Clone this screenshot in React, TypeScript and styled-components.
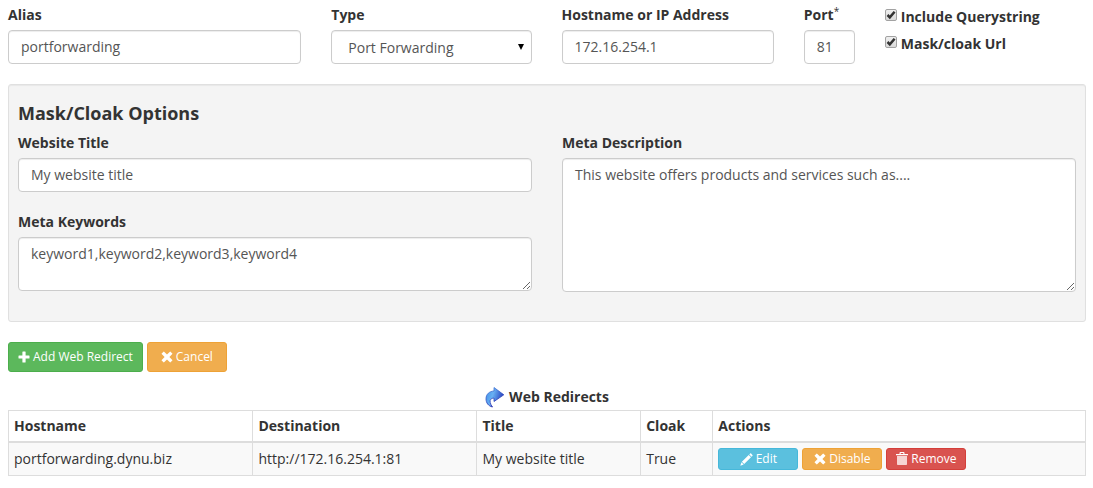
import React, { useState } from "react";
import styled, { createGlobalStyle, css } from "styled-components";

const GlobalStyle = createGlobalStyle`
  *, *::before, *::after { box-sizing: border-box; }
  body {
    margin: 0;
    background: #fff;
    color: #333;
    font-family: "Open Sans", "Helvetica Neue", Helvetica, Arial, sans-serif;
    font-size: 14px;
    line-height: 20px;
  }
`;

const Page = styled.main`
  padding: 5px 7px 12px 8px;
`;

const TopRow = styled.div`
  display: grid;
  grid-template-columns: 293fr 200fr 212fr 51fr 201fr;
  column-gap: 30px;
  margin-bottom: 20px;
`;

const Field = styled.div`
  display: flex;
  flex-direction: column;
  gap: 5px;
  min-width: 0;
`;

const Label = styled.label`
  font-weight: 700;
  white-space: nowrap;
`;

const Required = styled.span`
  font-size: 10px;
  font-weight: 400;
  line-height: 1;
  vertical-align: 5px;
`;

const control = css`
  display: block;
  width: 100%;
  margin: 0;
  padding: 6px 12px;
  border: 1px solid #ccc;
  border-radius: 4px;
  background: #fff;
  box-shadow: inset 0 1px 1px rgba(0, 0, 0, 0.075);
  color: #555;
  font-family: inherit;
  font-size: 14px;
  line-height: 20px;
`;

const TextInput = styled.input`
  ${control}
  height: 34px;
  padding: 5px 12px 7px;
`;

const TextArea = styled.textarea<{ $height: number }>`
  ${control}
  height: ${(p) => p.$height}px;
  resize: both;
`;

const SelectWrap = styled.div`
  position: relative;
`;

const Select = styled.select`
  ${control}
  height: 34px;
  padding: 7px 24px 5px 16px;
  appearance: none;
`;

const SelectArrow = styled.svg`
  position: absolute;
  top: 14px;
  right: 7px;
  pointer-events: none;
`;

const CheckList = styled.div`
  display: flex;
  flex-direction: column;
  gap: 7px;
  padding-top: 2px;
`;

const CheckRow = styled.label`
  display: flex;
  gap: 4px;
  font-weight: 700;
  white-space: nowrap;
`;

const CheckBoxWrap = styled.span`
  position: relative;
  width: 12px;
  height: 12px;
  margin-top: 2px;
`;

const CheckBox = styled.input`
  display: block;
  width: 12px;
  height: 12px;
  margin: 0;
  appearance: none;
  border: 1px solid #a2a2a2;
  border-radius: 2px;
  background: linear-gradient(#efefef, #dadada);
`;

const CheckMark = styled.svg`
  position: absolute;
  top: 0;
  left: 0;
  pointer-events: none;
`;

const Well = styled.section`
  margin-bottom: 20px;
  padding: 18px 9px 29px;
  border: 1px solid #e0e0e0;
  border-radius: 3px;
  background: #f4f4f4;
  box-shadow: inset 0 1px 1px rgba(0, 0, 0, 0.05);
`;

const WellTitle = styled.h4`
  margin: 0 0 10px;
  font-size: 18px;
  font-weight: 700;
  line-height: 20px;
`;

const Columns = styled.div`
  display: grid;
  grid-template-columns: 1fr 1fr;
  column-gap: 30px;
`;

const Stack = styled.div`
  display: flex;
  flex-direction: column;
  gap: 20px;
`;

type Tone = "success" | "warning" | "info" | "danger";

const tones: Record<Tone, { fill: string; edge: string }> = {
  success: { fill: "#5cb85c", edge: "#4cae4c" },
  warning: { fill: "#f0ad4e", edge: "#eea236" },
  info: { fill: "#5bc0de", edge: "#46b8da" },
  danger: { fill: "#d9534f", edge: "#d43f3a" },
};

const Button = styled.button<{ $tone: Tone; $small?: boolean }>`
  display: inline-flex;
  align-items: center;
  justify-content: center;
  gap: 3px;
  min-width: 80px;
  height: ${(p) => (p.$small ? 22 : 30)}px;
  padding: 0 ${(p) => (p.$small ? 5 : 9)}px;
  border: 1px solid ${(p) => tones[p.$tone].edge};
  border-radius: 3px;
  background: ${(p) => tones[p.$tone].fill};
  color: #fff;
  font-family: inherit;
  font-size: 12px;
  line-height: 18px;
  white-space: nowrap;
  cursor: pointer;
`;

const ButtonRow = styled.div`
  display: flex;
  gap: 4px;
`;

const Actions = styled.div`
  display: flex;
  gap: 4px;
`;

const TableTitle = styled.caption`
  padding-bottom: 2px;
  font-weight: 700;
`;

const TitleContent = styled.span`
  display: flex;
  align-items: center;
  justify-content: center;
  gap: 4px;
`;

const Table = styled.table`
  width: 100%;
  margin-top: 14px;
  border-collapse: collapse;
  table-layout: fixed;
`;

const Col = styled.col<{ $share: number }>`
  width: ${(p) => p.$share}%;
`;

const HeadCell = styled.th`
  padding: 5px;
  border: 1px solid #ddd;
  border-bottom-width: 2px;
  font-weight: 700;
  text-align: left;
`;

const Cell = styled.td`
  padding: 5px;
  border: 1px solid #ddd;
  background: #f9f9f9;
`;

const PlusIcon = () => (
  <svg width="12" height="12" viewBox="0 0 12 12" fill="#fff" aria-hidden="true">
    <path d="M4.900.5h2.200q.5 0 .5.5v3.400H11q.5 0 .5.5v2.200q0 .5-.5.5H7.600V11q0 .5-.5.5H4.900q-.5 0-.5-.5V7.600H1q-.5 0-.5-.5V4.900q0-.5.5-.5h3.400V1q0-.5.5-.5z" />
  </svg>
);

const CrossIcon = () => (
  <svg width="12" height="12" viewBox="0 0 12 12" fill="#fff" aria-hidden="true">
    <path d="M3.100.7 6 3.600 8.900.7q.3-.3.600 0l1.800 1.800q.3.3 0 .600L8.400 6l2.900 2.900q.3.3 0 .600l-1.800 1.800q-.3.3-.600 0L6 8.400l-2.900 2.900q-.3.3-.600 0L.7 9.500q-.3-.3 0-.600L3.600 6 .7 3.100q-.3-.3 0-.600L2.500.7q.3-.3.600 0z" />
  </svg>
);

const PencilIcon = () => (
  <svg width="13" height="13" viewBox="0 0 13 13" fill="#fff" aria-hidden="true">
    <path d="M10.100.6q.5-.5 1 0l1.300 1.300q.5.500 0 1l-.800.800-2.300-2.300zM8.700 2l2.300 2.300-6.800 6.800-2.300-2.300zM1.500 9.300l2.200 2.200L.3 12.700z" />
  </svg>
);

const TrashIcon = () => (
  <svg width="12" height="14" viewBox="0 0 12 14" fill="#fff" aria-hidden="true">
    <path d="M3.500 2V1q0-1 1-1h3q1 0 1 1v1H12v1.200H0V2zM4.700 2h2.600v-.900H4.700z" fillRule="evenodd" />
    <path d="M1 4h10v8.200q0 .8-.8.800H1.800Q1 13 1 12.200z" opacity=".75" />
  </svg>
);

const RedirectIcon = () => (
  <svg width="20" height="22" viewBox="0 0 20 22" aria-hidden="true">
    <defs>
      <linearGradient id="arrowFill" x1="0" y1="0" x2="1" y2="0.3">
        <stop offset="0" stopColor="#3f8fe6" />
        <stop offset="0.45" stopColor="#69b0f3" />
        <stop offset="1" stopColor="#2a44c0" />
      </linearGradient>
      <linearGradient id="arrowEdge" x1="0" y1="0" x2="0.4" y2="1">
        <stop offset="0" stopColor="#4a8ae0" />
        <stop offset="1" stopColor="#1c1fa8" />
      </linearGradient>
    </defs>
    <path
      d="M9 1.500 18.800 8.800 9 15.500V12.100C6 12 4.600 13.800 5.200 16.400 5.600 18.200 6.300 19.600 7.500 21 3.300 20 1 16.900 1 12.800 1 8 4.600 5.200 9 5z"
      fill="url(#arrowFill)"
      stroke="url(#arrowEdge)"
      strokeWidth="0.8"
      strokeLinejoin="round"
    />
  </svg>
);

function CheckOption({ id, text }: { id: string; text: string }) {
  const [checked, setChecked] = useState(true);
  return (
    <CheckRow htmlFor={id}>
      <CheckBoxWrap>
        <CheckBox id={id} type="checkbox" checked={checked} onChange={() => setChecked(!checked)} />
        {checked && (
          <CheckMark width="12" height="12" viewBox="0 0 12 12" aria-hidden="true">
            <path d="M2.500 6 4.800 8.300 9.600 2.700" fill="none" stroke="#333" strokeWidth="2.500" />
          </CheckMark>
        )}
      </CheckBoxWrap>
      {text}
    </CheckRow>
  );
}

export default function App() {
  return (
    <>
      <GlobalStyle />
      <Page>
        <TopRow>
          <Field>
            <Label htmlFor="alias">Alias</Label>
            <TextInput id="alias" defaultValue="portforwarding" />
          </Field>
          <Field>
            <Label htmlFor="type">Type</Label>
            <SelectWrap>
              <Select id="type" defaultValue="port">
                <option value="port">Port Forwarding</option>
              </Select>
              <SelectArrow width="8" height="6" viewBox="0 0 8 6" aria-hidden="true">
                <path d="M1 0h6L4 6z" fill="#000" />
              </SelectArrow>
            </SelectWrap>
          </Field>
          <Field>
            <Label htmlFor="host">Hostname or IP Address</Label>
            <TextInput id="host" defaultValue="172.16.254.1" />
          </Field>
          <Field>
            <Label htmlFor="port">
              Port<Required>*</Required>
            </Label>
            <TextInput id="port" defaultValue="81" />
          </Field>
          <CheckList>
            <CheckOption id="query" text="Include Querystring" />
            <CheckOption id="mask" text="Mask/cloak Url" />
          </CheckList>
        </TopRow>

        <Well>
          <WellTitle>Mask/Cloak Options</WellTitle>
          <Columns>
            <Stack>
              <Field>
                <Label htmlFor="title">Website Title</Label>
                <TextInput id="title" defaultValue="My website title" />
              </Field>
              <Field>
                <Label htmlFor="keywords">Meta Keywords</Label>
                <TextArea id="keywords" $height={54} defaultValue="keyword1,keyword2,keyword3,keyword4" />
              </Field>
            </Stack>
            <Field>
              <Label htmlFor="description">Meta Description</Label>
              <TextArea
                id="description"
                $height={134}
                defaultValue="This website offers products and services such as...."
              />
            </Field>
          </Columns>
        </Well>

        <ButtonRow>
          <Button type="button" $tone="success">
            <PlusIcon />
            Add Web Redirect
          </Button>
          <Button type="button" $tone="warning">
            <CrossIcon />
            Cancel
          </Button>
        </ButtonRow>

        <Table>
          <TableTitle>
            <TitleContent>
              <RedirectIcon />
              Web Redirects
            </TitleContent>
          </TableTitle>
          <colgroup>
            <Col $share={22.7} />
            <Col $share={20.8} />
            <Col $share={15.2} />
            <Col $share={6.7} />
            <Col $share={34.6} />
          </colgroup>
          <thead>
            <tr>
              <HeadCell scope="col">Hostname</HeadCell>
              <HeadCell scope="col">Destination</HeadCell>
              <HeadCell scope="col">Title</HeadCell>
              <HeadCell scope="col">Cloak</HeadCell>
              <HeadCell scope="col">Actions</HeadCell>
            </tr>
          </thead>
          <tbody>
            <tr>
              <Cell>portforwarding.dynu.biz</Cell>
              <Cell>http://172.16.254.1:81</Cell>
              <Cell>My website title</Cell>
              <Cell>True</Cell>
              <Cell>
                <Actions>
                  <Button type="button" $tone="info" $small>
                    <PencilIcon />
                    Edit
                  </Button>
                  <Button type="button" $tone="warning" $small>
                    <CrossIcon />
                    Disable
                  </Button>
                  <Button type="button" $tone="danger" $small>
                    <TrashIcon />
                    Remove
                  </Button>
                </Actions>
              </Cell>
            </tr>
          </tbody>
        </Table>
      </Page>
    </>
  );
}
